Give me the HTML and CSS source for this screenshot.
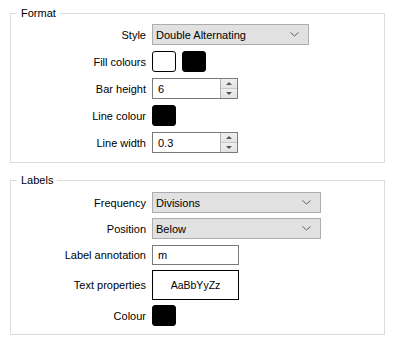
FILE: index.html
```html
<!DOCTYPE html>
<html lang="en">
<head>
    <meta charset="UTF-8">
    <title>Scale Bar Properties</title>
    <link rel="stylesheet" href="styles.css">
</head>
<body>

    <div class="panel">

        <fieldset class="group group-format">
            <legend>Format</legend>

            <div class="row">
                <label>Style</label>
                <div class="combo combo-style">
                    <span>Double Alternating</span>
                    <svg class="chevron" width="9" height="5" viewBox="0 0 9 5"><polyline points="0.5,0.5 4.5,4 8.5,0.5" fill="none" stroke="#5f5f5f" stroke-width="1"/></svg>
                </div>
            </div>

            <div class="row">
                <label>Fill colours</label>
                <div class="swatches">
                    <div class="swatch swatch-white"></div>
                    <div class="swatch"></div>
                </div>
            </div>

            <div class="row">
                <label>Bar height</label>
                <div class="spin">
                    <span class="spin-value">6</span>
                    <div class="spin-buttons">
                        <div class="spin-btn"><span class="arrow-up"></span></div>
                        <div class="spin-btn"><span class="arrow-down"></span></div>
                    </div>
                </div>
            </div>

            <div class="row">
                <label>Line colour</label>
                <div class="swatch"></div>
            </div>

            <div class="row">
                <label>Line width</label>
                <div class="spin">
                    <span class="spin-value">0.3</span>
                    <div class="spin-buttons">
                        <div class="spin-btn"><span class="arrow-up"></span></div>
                        <div class="spin-btn"><span class="arrow-down"></span></div>
                    </div>
                </div>
            </div>
        </fieldset>

        <fieldset class="group group-labels">
            <legend>Labels</legend>

            <div class="row">
                <label>Frequency</label>
                <div class="combo combo-wide">
                    <span>Divisions</span>
                    <svg class="chevron" width="9" height="5" viewBox="0 0 9 5"><polyline points="0.5,0.5 4.5,4 8.5,0.5" fill="none" stroke="#5f5f5f" stroke-width="1"/></svg>
                </div>
            </div>

            <div class="row">
                <label>Position</label>
                <div class="combo combo-wide">
                    <span>Below</span>
                    <svg class="chevron" width="9" height="5" viewBox="0 0 9 5"><polyline points="0.5,0.5 4.5,4 8.5,0.5" fill="none" stroke="#5f5f5f" stroke-width="1"/></svg>
                </div>
            </div>

            <div class="row">
                <label>Label annotation</label>
                <div class="textbox">m</div>
            </div>

            <div class="row row-tall">
                <label>Text properties</label>
                <div class="font-preview">AaBbYyZz</div>
            </div>

            <div class="row">
                <label>Colour</label>
                <div class="swatch"></div>
            </div>
        </fieldset>

    </div>

</body>
</html>
```

FILE: styles.css
```css
body {
    margin: 0;
    background: #fff;
    font-family: "Liberation Sans", Arial, sans-serif;
    font-size: 11px;
    color: #000;
}
.panel {
    width: 394px;
    padding-left: 10px;
    box-sizing: border-box;
}
.group {
    width: 375px;
    box-sizing: border-box;
    margin: 6px 0 0 0;
    border: 1px solid #dcdcdc;
    padding: 4px 0 9px 0;
    display: flex;
    flex-direction: column;
    gap: 6px;
}
.group-labels {
    margin-top: 10px;
    padding: 5px 0 8px 0;
    gap: 5px;
}
.group legend {
    margin-left: 6px;
    padding: 0 4px;
    line-height: 14px;
}
.row {
    display: flex;
    align-items: center;
    height: 21px;
}
.row-tall {
    height: 30px;
}
.row label {
    width: 135px;
    margin-right: 6px;
    text-align: right;
    white-space: nowrap;
}

.combo {
    height: 21px;
    box-sizing: border-box;
    border: 1px solid #adadad;
    background: #e1e1e1;
    display: flex;
    align-items: center;
    justify-content: space-between;
    padding: 0 9px 0 3px;
}
.combo-style {
    width: 157px;
}
.combo-wide {
    width: 169px;
}

.swatches {
    display: flex;
    gap: 6px;
}
.swatch {
    width: 24px;
    height: 21px;
    box-sizing: border-box;
    border: 1px solid #000;
    border-radius: 3px;
    background: #000;
}
.swatch-white {
    background: #fff;
}

.spin {
    width: 86px;
    height: 21px;
    box-sizing: border-box;
    border: 1px solid #7a7a7a;
    display: flex;
    justify-content: space-between;
    align-items: center;
}
.spin-value {
    padding-left: 5px;
}
.spin-buttons {
    width: 17px;
    height: 19px;
    display: flex;
    flex-direction: column;
    border-left: 1px solid #b4b4b4;
    box-sizing: border-box;
}
.spin-btn {
    flex: 1;
    display: flex;
    align-items: center;
    justify-content: center;
    background: linear-gradient(#f0f0f0, #e2e2e2);
    border-bottom: 1px solid #c8c8c8;
}
.spin-btn:last-child {
    border-bottom: none;
}
.arrow-up {
    width: 0;
    height: 0;
    border-left: 3px solid transparent;
    border-right: 3px solid transparent;
    border-bottom: 3px solid #555;
}
.arrow-down {
    width: 0;
    height: 0;
    border-left: 3px solid transparent;
    border-right: 3px solid transparent;
    border-top: 3px solid #555;
}

.textbox {
    width: 87px;
    height: 20px;
    box-sizing: border-box;
    border: 1px solid #7a7a7a;
    padding-left: 5px;
    line-height: 18px;
}
.font-preview {
    width: 87px;
    height: 30px;
    box-sizing: border-box;
    border: 1px solid #000;
    display: flex;
    align-items: center;
    justify-content: center;
    font-size: 10.5px;
}
```
